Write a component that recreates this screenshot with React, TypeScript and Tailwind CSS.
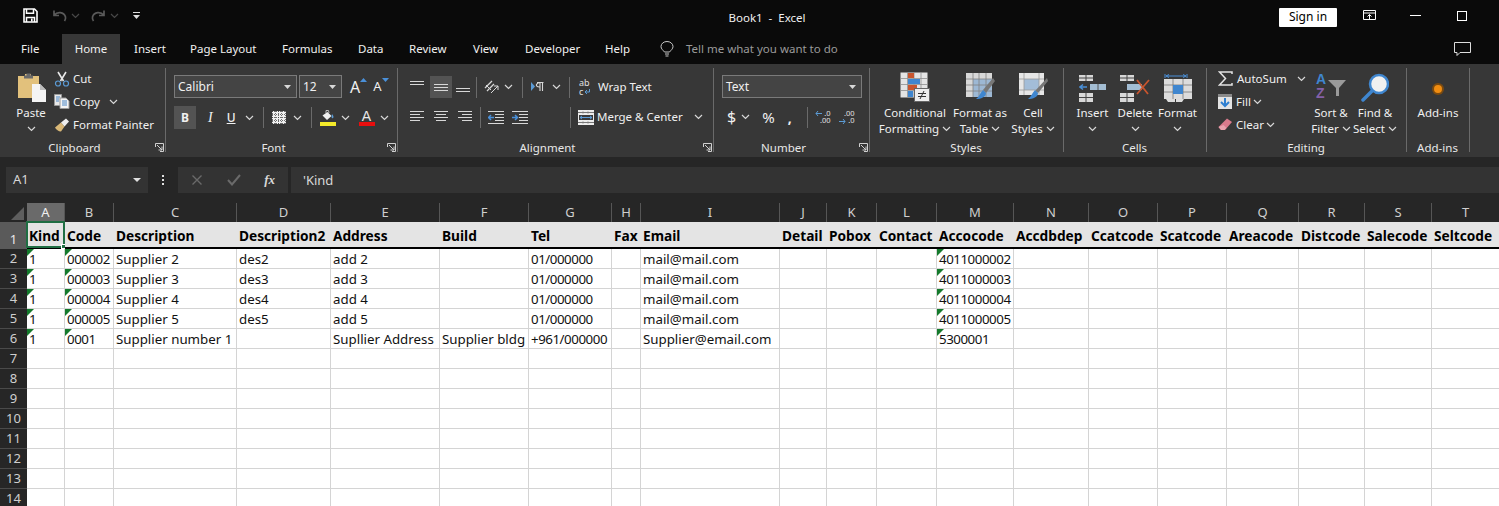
import React from "react";

const Chev = ({ c = "" }: { c?: string }) => (
  <svg width="9" height="6" viewBox="0 0 9 6" className={c}>
    <path d="M1 1l3.5 3.5L8 1" fill="none" stroke="#d8d8d8" strokeWidth="1.2" />
  </svg>
);
const Launcher = () => (
  <svg width="9" height="9" viewBox="0 0 9 9" className="absolute right-[1px] top-[75px]">
    <path d="M.5 4V.5H8.5V8.5H5" fill="none" stroke="#d0d0d0" />
    <path d="M2 2l5 5M7 3.5V7H3.5" fill="none" stroke="#d0d0d0" />
  </svg>
);
const Sep = ({ c = "" }: { c?: string }) => <div className={`w-px bg-[#6a6a6a] ${c}`} />;

const Group = ({ w, label, launcher, children }: { w: string; label: string; launcher?: boolean; children: React.ReactNode }) => (
  <div className={`relative flex h-[84px] shrink-0 flex-col border-r border-[#6a6a6a] ${w}`}>
    <div className="h-[72px] shrink-0">{children}</div>
    <div className={`mt-[1px] h-[14px] shrink-0 text-center text-[11.5px] leading-[14px] text-[#e8e8e8] ${launcher ? "pr-[16px]" : "pr-[1px]"}`}>{label}</div>
    {launcher && <Launcher />}
  </div>
);

const Big = ({ w, icon, l1, l2, chev }: { w: string; icon: React.ReactNode; l1: string; l2?: string; chev?: boolean }) => (
  <div className={`flex shrink-0 flex-col items-center ${w}`}>
    <div className="flex h-[34px] items-end justify-center">{icon}</div>
    <div className="mt-[3px] whitespace-nowrap leading-[16px]">{l1}</div>
    <div className="flex h-[16px] items-center justify-center gap-[3px] whitespace-nowrap leading-[16px]">
      {l2}
      {chev && <Chev />}
    </div>
  </div>
);

const Lines = ({ rows }: { rows: [number, number, number][] }) => (
  <svg width="16" height="14" viewBox="0 0 16 14">
    {rows.map(([x, y, w], i) => (
      <rect key={i} x={x} y={y} width={w} height="1" fill="#d8d8d8" />
    ))}
  </svg>
);

const Combo = ({ w, t }: { w: string; t: string }) => (
  <div className={`flex h-[23px] items-center justify-between border border-[#7a7a7a] bg-[#444444] pl-[3px] pr-[5px] text-[12px] ${w}`}>
    <span>{t}</span>
    <svg width="7" height="4" viewBox="0 0 7 4"><path d="M0 0h7L3.500 4z" fill="#d8d8d8" /></svg>
  </div>
);

const IconSave = () => (
  <svg width="15" height="15" viewBox="0 0 15 15">
    <path d="M1 1h10.500L14 3.500V14H1z" fill="none" stroke="#fff" strokeWidth="1.600" />
    <path d="M3.500 1v4.200h7V1" fill="none" stroke="#fff" strokeWidth="1.500" />
    <path d="M3.500 14V9.500h8V14" fill="none" stroke="#fff" strokeWidth="1.500" />
    <rect x="8" y="10.500" width="1.600" height="3" fill="#fff" />
  </svg>
);
const IconUndo = ({ flip }: { flip?: boolean }) => (
  <svg width="15" height="13" viewBox="0 0 15 13" className={flip ? "-scale-x-100" : ""}>
    <path d="M2 1.500v5h5M2.500 6C5 2.500 12 2.500 13.500 8c.3 1.500-.3 3-1 4" fill="none" stroke="#5a5a5a" strokeWidth="1.700" />
  </svg>
);
const IconPaste = () => (
  <svg width="30" height="30" viewBox="0 0 30 30">
    <path d="M2 4h7V2h6v2h8v22H2z" fill="#e2c17c" />
    <path d="M8 3.500h2.500V1.500h4v2H17v3H8z" fill="#6a6a6a" />
    <path d="M16 12h8l6 6v12H16z" fill="#f4f4f4" />
    <path d="M24 12v6h6" fill="#bdbdbd" />
  </svg>
);
const IconCut = () => (
  <svg width="16" height="16" viewBox="0 0 16 16">
    <path d="M4 1l5.500 9M12 1L6.500 10" stroke="#e8e8e8" strokeWidth="1.600" fill="none" />
    <circle cx="4" cy="12.500" r="2.500" fill="none" stroke="#5b9bd5" strokeWidth="1.200" />
    <circle cx="12" cy="12.500" r="2.500" fill="none" stroke="#5b9bd5" strokeWidth="1.200" />
  </svg>
);
const IconCopy = () => (
  <svg width="16" height="15" viewBox="0 0 16 15">
    <path d="M.5.5h7v11h-7z" fill="#e8e8e8" stroke="#999" />
    <path d="M6 4h6l3 3v7.500H6z" fill="#f4f4f4" stroke="#999" />
    <path d="M2 3h4M2 5h3M2 7h3M8 7h5M8 9h5M8 11h5" stroke="#4a86c5" />
  </svg>
);
const IconPainter = () => (
  <svg width="16" height="15" viewBox="0 0 16 15">
    <path d="M1 10.500l6-5 3.500 4-3.500 5c-2 .2-5-2-6-4z" fill="#d9b877" />
    <path d="M7 5.500L12 1.500l3 3-4.500 5z" fill="#eeeeee" />
  </svg>
);
const IconBorder = () => (
  <svg width="14" height="13" viewBox="0 0 14 13">
    <rect x="0" y="0" width="14" height="13" fill="#f0f0f0" />
    <path d="M0 .5h14M0 3.500h14M0 6.500h14M0 9.500h14M0 12.500h14M.5 0v13M3.500 0v13M6.500 0v13M9.500 0v13M13.500 0v13" stroke="#333" strokeWidth=".7" strokeDasharray="1 1" />
  </svg>
);
const IconFill = () => (
  <svg width="17" height="17" viewBox="0 0 17 17">
    <path d="M3.500 6.500L8.500 3l4 4-4.500 4z" fill="#f0f0f0" />
    <path d="M7 4V1.500h2.500L10 4" fill="none" stroke="#bbb" />
    <path d="M13 5c1.500 2 2 3 1 4s-2 0-1-4z" fill="#5b9bd5" />
    <rect x="1" y="13" width="16" height="4" fill="#f4ea2a" />
  </svg>
);
const IconFontColor = () => (
  <svg width="17" height="17" viewBox="0 0 17 17" className="overflow-visible">
    <text x="8.500" y="12" textAnchor="middle" fontSize="14" fill="#e8e8e8" fontFamily="Liberation Sans">A</text>
    <rect x="1" y="13" width="16" height="4" fill="#e80e0e" />
  </svg>
);
const IconOrient = () => (
  <svg width="16" height="16" viewBox="0 0 16 16">
    <path d="M1 9l7-7M3 12l7-7" stroke="#d8d8d8" strokeWidth="1.300" />
    <path d="M2 6l5 5M7 14l7-7m0 4V7h-4" stroke="#d8d8d8" fill="none" />
  </svg>
);
const IconRtl = () => (
  <svg width="13" height="10" viewBox="0 0 13 10">
    <path d="M0 0l4 4.500L0 9z" fill="#5b9bd5" />
    <path d="M9 1v8M11.500 1v8M6 .5h6.500M8.500 5C6 5 5 3.500 5.500 2.500S7 .5 9 .5" fill="none" stroke="#d8d8d8" strokeWidth="1.100" />
  </svg>
);
const IconWrap = () => (
  <div className="flex w-[14px] flex-col text-[9px] leading-[9px] text-[#e0e0e0]">
    <span>ab</span>
    <span className="flex items-center">c<svg width="6" height="6" viewBox="0 0 6 6" className="ml-[1px]"><path d="M5.500 0v3H1m2-2L1 3l2 2" stroke="#5b9bd5" fill="none" /></svg></span>
  </div>
);
const IconMerge = () => (
  <svg width="16" height="15" viewBox="0 0 16 15">
    <rect width="16" height="15" fill="#ececec" />
    <rect x="1" y="5" width="14" height="5" fill="#3a3a3a" />
    <path d="M5 1.500v2M10 1.500v2M5 11.500v2M10 11.500v2M0 2.500h16M0 12.500h16" stroke="#777" />
    <path d="M2 7.500h12M4 6l-2 1.500L4 9M12 6l2 1.500L12 9" stroke="#5b9bd5" fill="none" />
  </svg>
);
const IconIndent = ({ inc }: { inc?: boolean }) => (
  <svg width="16" height="13" viewBox="0 0 16 13">
    <path d="M0 .5h16M7 3.500h9M7 6.500h9M7 9.500h9M0 12.500h16" stroke="#d8d8d8" />
    {inc ? <path d="M0 6.500h5M3 4l2.500 2.500L3 9" stroke="#4a90d9" strokeWidth="1.500" fill="none" /> : <path d="M6 6.500H1M3 4L.5 6.500 3 9" stroke="#4a90d9" strokeWidth="1.500" fill="none" />}
  </svg>
);
const IconDec = ({ inc }: { inc?: boolean }) => (
  <div className="relative h-[15px] w-[16px] text-[7.5px] leading-[7.5px] text-[#e0e0e0]">
    <div className="text-right">{inc ? ".00" : ".0"}</div>
    <div className="text-right">{inc ? ".0" : ".00"}</div>
    <svg width="7" height="7" viewBox="0 0 7 7" className={inc ? "absolute bottom-0 left-0" : "absolute left-0 top-0"}>
      {inc ? <path d="M0 3.500h6M4 1l2 2.500L4 6" stroke="#5b9bd5" fill="none" /> : <path d="M1 3.500h6M3 1L1 3.500 3 6" stroke="#5b9bd5" fill="none" />}
    </svg>
  </div>
);
const TableBase = ({ children }: { children?: React.ReactNode }) => (
  <svg width="30" height="30" viewBox="0 0 30 30" className="overflow-visible">
    <rect x="0.500" y="0.500" width="27" height="25" fill="#e4e4e4" />
    <path d="M0 6.500h28M0 12.500h28M0 18.500h28M7.500 0v26M14 0v26M21 0v26" stroke="#8e8e8e" strokeWidth=".8" />
    {children}
  </svg>
);
const IconCF = () => (
  <TableBase>
    <rect x="8" y="1" width="6" height="5" fill="#c8552e" />
    <rect x="8" y="7" width="12" height="5" fill="#3f86cf" />
    <rect x="8" y="13" width="9" height="5" fill="#c8552e" />
    <rect x="8" y="19" width="5" height="6" fill="#3f86cf" />
    <rect x="14.500" y="16.500" width="15" height="13" fill="#eeeeee" stroke="#666" />
    <path d="M18 21.500h8M18 24.500h8M24 19l-4 8" stroke="#333" fill="none" />
  </TableBase>
);
const IconFT = () => (
  <svg width="30" height="30" viewBox="0 0 30 30">
    <rect x="1" y="1" width="26" height="24" fill="#d8d8d8" />
    <rect x="8" y="7" width="19" height="18" fill="#9db8d4" />
    <path d="M1 7h26M1 13h26M1 19h26M8 1v24M14 1v24M21 1v24" stroke="#808080" strokeWidth=".8" />
    <path d="M28 6l2 3-9 12-3-3z" fill="#777" />
    <path d="M18 18l3 3c0 4-5 6-10 6 3-2 4-6 7-9z" fill="#3f86cf" />
  </svg>
);
const IconCS = () => (
  <svg width="30" height="30" viewBox="0 0 30 30">
    <rect x="1" y="1" width="25" height="22" fill="#e6e6e6" />
    <rect x="6" y="7" width="15" height="11" fill="#a3bdd8" />
    <path d="M1 7h25M1 18h25M6 1v22M21 1v22" stroke="#999" strokeWidth=".8" />
    <path d="M29 6l1 3-10 12-3-2z" fill="#777" />
    <path d="M17 18l3 3c0 4-5 6-10 6 3-2 4-6 7-9z" fill="#3f86cf" />
  </svg>
);
const cellsA = "M0 0h14v6H0zM0 18h14v9H0z";
const IconInsert = () => (
  <svg width="27" height="27" viewBox="0 0 27 27">
    <path d={cellsA} fill="#d8d8d8" />
    <path d="M0 3h14M7 0v6M0 22.500h14M7 18v9" stroke="#444" />
    <path d="M11 9h16v6H11z" fill="#a3bdd3" />
    <path d="M19 9v6" stroke="#555" />
    <path d="M8 12H1M4 9.500L1 12l3 2.500" stroke="#4a90d9" strokeWidth="1.500" fill="none" />
  </svg>
);
const IconDelete = () => (
  <svg width="30" height="27" viewBox="0 0 30 27">
    <path d={cellsA} fill="#d8d8d8" />
    <path d="M0 3h14M7 0v6M0 22.500h14M7 18v9" stroke="#444" />
    <path d="M7 9h15v6H7z" fill="#a3bdd3" />
    <path d="M17 5l11 14M29 5L17 19" stroke="#c8552e" strokeWidth="1.800" />
  </svg>
);
const IconFormat = () => (
  <svg width="28" height="29" viewBox="0 0 28 29">
    <path d="M1 1v4M23 1v4M2 3h20M5 1.500L2 3l3 1.500M19 1.500L22 3l-3 1.500" stroke="#4a90d9" fill="none" />
    <rect y="6" width="28" height="20" fill="#dcdcdc" />
    <path d="M0 12h28M0 19h28M9 6v20M19 6v20" stroke="#777" strokeWidth=".8" />
    <rect x="9" y="12" width="10" height="9" fill="#3f86cf" />
    <path d="M2 26h9v3H4zM12 26h8l-2 3h-6z" fill="#dcdcdc" />
  </svg>
);
const IconSum = () => (
  <svg width="15" height="15" viewBox="0 0 15 15">
    <path d="M14 3V1H1.500l6 6.500-6 6.500H14v-2" fill="none" stroke="#e4e4e4" strokeWidth="1.500" />
  </svg>
);
const IconFillDown = () => (
  <svg width="14" height="15" viewBox="0 0 14 15">
    <rect width="14" height="15" fill="#e4e4e4" />
    <rect y="0" width="14" height="3" fill="#8a8a8a" />
    <path d="M7 4v8M3 8l4 4 4-4" stroke="#2f7fd0" strokeWidth="2" fill="none" />
  </svg>
);
const IconEraser = () => (
  <svg width="14" height="13" viewBox="0 0 14 13">
    <path d="M9 .5L14 4l-7 8H3L.500 9z" fill="#d97a8c" />
    <path d="M.500 9l5-2 3 3-2 2H3z" fill="#e9a2ae" />
  </svg>
);
const IconSort = () => (
  <div className="relative h-[30px] w-[30px] font-['Liberation_Sans',sans-serif] text-[14px] font-bold leading-[14px]">
    <div className="text-[#3f86cf]">A</div>
    <div className="text-[#8460a8]">Z</div>
    <svg width="18" height="17" viewBox="0 0 18 17" className="absolute left-[12px] top-[8px]"><path d="M0 0h18l-7 8v8H8V8z" fill="#9a9a9a" /></svg>
  </div>
);
const IconFind = () => (
  <svg width="28" height="29" viewBox="0 0 28 29">
    <circle cx="18" cy="11" r="9" fill="#f0f0f0" stroke="#3f86cf" strokeWidth="2.500" />
    <path d="M11 18L2 27" stroke="#3f86cf" strokeWidth="3.500" strokeLinecap="round" />
  </svg>
);
const IconAddins = () => (
  <svg width="16" height="30" viewBox="0 0 16 30">
    <circle cx="8" cy="17" r="6" fill="#7a4a10" />
    <circle cx="8" cy="17" r="4" fill="#f08c10" />
  </svg>
);
const FxX = () => (
  <svg width="12" height="12" viewBox="0 0 12 12"><path d="M1.500 1.500l9 9M10.500 1.500l-9 9" stroke="#6a6a6a" strokeWidth="1.400" /></svg>
);
const FxC = () => (
  <svg width="14" height="12" viewBox="0 0 14 12"><path d="M1 6l4 4.500L13 1" fill="none" stroke="#6a6a6a" strokeWidth="2" /></svg>
);

const tabs: [string, string][] = [
  ["File", "w-[62px] pl-[21px]"],
  ["Home", "w-[58px] justify-center bg-[#373737]"],
  ["Insert", "w-[70px] pl-[14px]"],
  ["Page Layout", "w-[92px] pl-[0px]"],
  ["Formulas", "w-[76px]"],
  ["Data", "w-[51px]"],
  ["Review", "w-[64px]"],
  ["View", "w-[52px]"],
  ["Developer", "w-[80px]"],
  ["Help", "w-[55px]"],
];

const headers = ["Kind", "Code", "Description", "Description2", "Address", "Build", "Tel", "Fax", "Email", "Detail", "Pobox", "Contact", "Accocode", "Accdbdep", "Ccatcode", "Scatcode", "Areacode", "Distcode", "Salecode", "Seltcode"];
const letters = "ABCDEFGHIJKLMNOPQRST".split("");
const data: Record<number, string[]> = {
  2: ["1", "000002", "Supplier 2", "des2", "add 2", "", "01/000000", "", "mail@mail.com", "", "", "", "4011000002"],
  3: ["1", "000003", "Supplier 3", "des3", "add 3", "", "01/000000", "", "mail@mail.com", "", "", "", "4011000003"],
  4: ["1", "000004", "Supplier 4", "des4", "add 4", "", "01/000000", "", "mail@mail.com", "", "", "", "4011000004"],
  5: ["1", "000005", "Supplier 5", "des5", "add 5", "", "01/000000", "", "mail@mail.com", "", "", "", "4011000005"],
  6: ["1", "0001", "Supplier number 1", "", "Supllier Address", "Supplier bldg", "+961/000000", "", "Supplier@email.com", "", "", "", "5300001"],
};
const rows = [2, 3, 4, 5, 6, 7, 8, 9, 10, 11, 12, 13, 14];
const Tri = () => (
  <svg width="7" height="7" viewBox="0 0 7 7" className="absolute left-0 top-0"><path d="M0 0h7L0 7z" fill="#157a2c" /></svg>
);

export default function App() {
  return (
    <div className="h-[506px] w-[1499px] overflow-hidden bg-[#262626] font-['Noto_Sans',sans-serif] text-[#f0f0f0]">
      {/* title row */}
      <div className="flex h-[34px] items-center bg-[#0a0a0a] text-[11.5px]">
        <div className="ml-[23px] mt-[-3px] flex w-[679px] items-center">
          <IconSave />
          <div className="ml-[14px]"><IconUndo /></div>
          <Chev c="ml-[4px] opacity-30" />
          <div className="ml-[11px]"><IconUndo flip /></div>
          <Chev c="ml-[4px] opacity-30" />
          <svg width="7" height="7" viewBox="0 0 7 7" className="ml-[14px]"><path d="M0 .5h7" stroke="#ddd" /><path d="M0 3h7L3.500 7z" fill="#ddd" /></svg>
        </div>
        <div className="w-[130px] pt-[1px] text-center">Book1&nbsp; -&nbsp; Excel</div>
        <div className="ml-[447px] flex h-[19px] w-[58px] items-center justify-center rounded-[1px] bg-white text-[12px] text-black">Sign in</div>
        <svg width="14" height="11" viewBox="0 0 14 11" className="mb-[3px] ml-[26px]"><path d="M.500.500h12v9h-12zM0 3h13M6.500 9V4.500M4.500 6.500l2-2 2 2" fill="none" stroke="#fff" /></svg>
        <div className="mb-[3px] ml-[33px] h-px w-[11px] bg-white" />
        <div className="mb-[3px] ml-[36px] h-[10px] w-[10px] border border-white" />
      </div>
      {/* tabs */}
      <div className="flex h-[30px] items-stretch bg-[#0a0a0a] text-[11.5px]">
        {tabs.map(([t, c]) => (
          <div key={t} className={`flex items-center ${c}`}>{t}</div>
        ))}
        <div className="flex items-center text-[#9a9a9a]">
          <svg width="14" height="16" viewBox="0 0 14 16"><path d="M4.500 11C3 9 1 8 1 5.500a6 5 0 0 1 12 0C13 8 11 9 9.500 11zM5 13h4M5.500 15h3" fill="none" stroke="#c8c8c8" /></svg>
          <span className="ml-[12px]">Tell me what you want to do</span>
        </div>
        <div className="flex flex-1 items-center justify-end pr-[28px]">
          <svg width="17" height="15" viewBox="0 0 17 15"><path d="M.500.500h16v10H6l-3 3v-3H.500z" fill="none" stroke="#ddd" /></svg>
        </div>
      </div>
      {/* ribbon */}
      <div className="flex h-[93px] bg-[#373737] pb-[5px] pt-[4px] text-[11.5px] text-[#f0f0f0]">
        <Group w="w-[166px]" label="Clipboard" launcher>
          <div className="flex">
            <div className="ml-[10px] w-[42px]">
              <Big w="w-[42px]" icon={<IconPaste />} l1="Paste" chev />
            </div>
            <div className="ml-[2px] mt-[-1px] flex flex-col">
              <div className="flex h-[23px] items-center gap-[3px]"><IconCut /><span>Cut</span></div>
              <div className="flex h-[23px] items-center gap-[3px]"><IconCopy /><span>Copy</span><Chev c="ml-[6px]" /></div>
              <div className="flex h-[23px] items-center gap-[3px]"><IconPainter /><span>Format Painter</span></div>
            </div>
          </div>
        </Group>
        <Group w="w-[232px]" label="Font" launcher>
          <div className="pl-[8px] pt-[7px]">
            <div className="flex items-center">
              <Combo w="w-[123px]" t="Calibri" />
              <div className="ml-[2px]"><Combo w="w-[43px]" t="12" /></div>
              <span className="ml-[8px] text-[16px] leading-none">A</span>
              <svg width="7" height="4" viewBox="0 0 7 4" className="mb-[14px]"><path d="M0 4h7L3.500 0z" fill="#4a90d9" /></svg>
              <span className="ml-[6px] text-[13px] leading-none">A</span>
              <svg width="7" height="4" viewBox="0 0 7 4" className="mb-[14px]"><path d="M0 0h7L3.500 4z" fill="#4a90d9" /></svg>
            </div>
            <div className="mt-[8px] flex h-[23px] items-center">
              <div className="flex h-[23px] w-[22px] items-center justify-center bg-[#535353] text-[12px] font-bold">B</div>
              <span className="ml-[12px] font-['Liberation_Serif',serif] text-[14px] italic">I</span>
              <span className="ml-[14px] text-[12px] font-medium underline">U</span>
              <Chev c="ml-[9px]" />
              <Sep c="ml-[9px] h-[21px]" />
              <div className="ml-[8px]"><IconBorder /></div>
              <Chev c="ml-[7px]" />
              <Sep c="ml-[9px] h-[21px]" />
              <div className="ml-[7px]"><IconFill /></div>
              <Chev c="ml-[5px]" />
              <div className="ml-[8px]"><IconFontColor /></div>
              <Chev c="ml-[5px]" />
            </div>
          </div>
        </Group>
        <Group w="w-[316px]" label="Alignment" launcher>
          <div className="pl-[12px] pt-[8px]">
            <div className="flex h-[22px] items-center">
              <Lines rows={[[0, 1, 14], [0, 4, 14]]} />
              <div className="ml-[4px] flex h-[22px] w-[22px] items-center justify-center bg-[#535353]"><Lines rows={[[1, 4, 14], [1, 7, 14], [1, 10, 14]]} /></div>
              <div className="ml-[4px]"><Lines rows={[[0, 8, 14], [0, 11, 14]]} /></div>
              <Sep c="ml-[4px] h-[21px]" />
              <div className="ml-[7px]"><IconOrient /></div>
              <Chev c="ml-[4px]" />
              <Sep c="ml-[9px] h-[21px]" />
              <div className="ml-[8px]"><IconRtl /></div>
              <Chev c="ml-[8px]" />
              <Sep c="ml-[8px] h-[21px]" />
              <div className="ml-[9px]"><IconWrap /></div>
              <span className="ml-[5px]">Wrap Text</span>
            </div>
            <div className="mt-[8px] flex h-[22px] items-center">
              <Lines rows={[[0, 1, 14], [0, 4, 10], [0, 7, 14], [0, 10, 10]]} />
              <div className="ml-[8px]"><Lines rows={[[0, 1, 14], [2, 4, 10], [0, 7, 14], [2, 10, 10]]} /></div>
              <div className="ml-[8px]"><Lines rows={[[0, 1, 14], [4, 4, 10], [0, 7, 14], [4, 10, 10]]} /></div>
              <Sep c="ml-[6px] h-[21px]" />
              <div className="ml-[7px]"><IconIndent /></div>
              <div className="ml-[8px]"><IconIndent inc /></div>
              <Sep c="ml-[42px] h-[21px]" />
              <div className="ml-[7px]"><IconMerge /></div>
              <span className="ml-[3px]">Merge &amp; Center</span>
              <Chev c="ml-[11px]" />
            </div>
          </div>
        </Group>
        <Group w="w-[156px]" label="Number" launcher>
          <div className="pl-[8px] pt-[7px]">
            <Combo w="w-[140px]" t="Text" />
            <div className="mt-[8px] flex h-[22px] items-center">
              <span className="ml-[5px] text-[16px]">$</span>
              <Chev c="ml-[5px]" />
              <span className="ml-[12px] text-[15px]">%</span>
              <span className="ml-[13px] text-[14px] font-bold">,</span>
              <Sep c="ml-[15px] h-[21px]" />
              <div className="ml-[7px]"><IconDec /></div>
              <div className="ml-[8px]"><IconDec inc /></div>
            </div>
          </div>
        </Group>
        <Group w="w-[194px]" label="Styles">
          <div className="flex pl-[10px]">
            <Big w="w-[70px]" icon={<IconCF />} l1="Conditional" l2="Formatting" chev />
            <Big w="w-[60px]" icon={<IconFT />} l1="Format as" l2="Table" chev />
            <Big w="w-[46px]" icon={<IconCS />} l1="Cell" l2="Styles" chev />
          </div>
        </Group>
        <Group w="w-[143px]" label="Cells">
          <div className="flex pl-[7px]">
            <Big w="w-[43px]" icon={<IconInsert />} l1="Insert" chev />
            <Big w="w-[42px]" icon={<IconDelete />} l1="Delete" chev />
            <Big w="w-[43px]" icon={<IconFormat />} l1="Format" chev />
          </div>
        </Group>
        <Group w="w-[200px]" label="Editing">
          <div className="flex pl-[11px]">
            <div className="mt-[-1px] flex w-[91px] flex-col">
              <div className="flex h-[23px] items-center gap-[4px]"><IconSum /><span>AutoSum</span><Chev c="ml-[6px]" /></div>
              <div className="flex h-[23px] items-center gap-[4px]"><IconFillDown /><span>Fill</span><Chev c="ml-[-2px]" /></div>
              <div className="flex h-[23px] items-center gap-[4px]"><IconEraser /><span>Clear</span><Chev c="ml-[-2px]" /></div>
            </div>
            <Big w="w-[44px]" icon={<IconSort />} l1="Sort &amp;" l2="Filter" chev />
            <Big w="w-[44px]" icon={<IconFind />} l1="Find &amp;" l2="Select" chev />
          </div>
        </Group>
        <Group w="w-[63px]" label="Add-ins">
          <Big w="w-[62px]" icon={<IconAddins />} l1="Add-ins" />
        </Group>
      </div>
      {/* formula bar */}
      <div className="flex h-[46px] items-start bg-[#262626] pt-[10px] text-[13px] text-[#d8d8d8]">
        <div className="ml-[6px] flex h-[26px] w-[142px] items-center justify-between bg-[#333333] px-[7px]">
          <span>A1</span>
          <svg width="8" height="4" viewBox="0 0 8 4"><path d="M0 0h8L4 4z" fill="#e0e0e0" /></svg>
        </div>
        <div className="flex h-[26px] w-[30px] flex-col items-center justify-center gap-[2px]">
          <div className="h-[2px] w-[2px] bg-[#e0e0e0]" />
          <div className="h-[2px] w-[2px] bg-[#e0e0e0]" />
          <div className="h-[2px] w-[2px] bg-[#e0e0e0]" />
        </div>
        <div className="flex h-[26px] w-[110px] items-center justify-between bg-[#333333] px-[13px]">
          <FxX />
          <FxC />
          <span className="font-['Liberation_Serif',serif] text-[13px] font-bold italic">fx</span>
        </div>
        <div className="ml-[3px] flex h-[26px] flex-1 items-center bg-[#333333] pl-[12px] pt-[1px]">'Kind</div>
      </div>
      {/* sheet */}
      <div className="grid grid-cols-[27px_38px_49px_123px_94px_109px_89px_83px_29px_139px_47px_50px_60px_77px_75px_69px_69px_72px_66px_67px_68px] grid-rows-[19px_27px_repeat(13,20px)]">
        <div className="flex items-end justify-end pb-[2px] pr-[3px]">
          <svg width="13" height="13" viewBox="0 0 13 13"><path d="M13 0v13H0z" fill="#5e5e5e" /></svg>
        </div>
        {letters.map((l, i) => (
          <div key={l} className={`flex items-center justify-center border-r border-[#565656] text-[13px] ${i === 0 ? "bg-[#6a6a6a] text-[#f0f0f0]" : "text-[#cfcfcf]"}`}>{l}</div>
        ))}
        <div className="flex items-end justify-center bg-[#5a5a5a] text-[13px] text-[#e8e8e8]">1</div>
        {headers.map((h, i) => (
          <div key={h} className="relative flex items-center whitespace-nowrap border-b-2 border-black bg-[#e4e4e4] pl-[2px] pt-[4px] text-[13.7px] font-bold text-black">
            {h}
            {i === 0 && (
              <div className="absolute left-[-1px] top-[-1px] h-[27px] w-[39px] border-2 border-[#1f6e43]">
                <div className="absolute bottom-[-3px] right-[-3px] h-[5px] w-[5px] border border-white bg-[#1f6e43]" />
              </div>
            )}
          </div>
        ))}
        {rows.map((r) => (
          <React.Fragment key={r}>
            <div className="flex items-center justify-center border-b border-[#4a4a4a] text-[13px] text-[#cfcfcf]">{r}</div>
            {letters.map((l, i) => {
              const v = data[r]?.[i] ?? "";
              const numeric = /^[+0-9/]+$/.test(v);
              return (
                <div key={l} className={`relative flex items-center whitespace-nowrap border-b border-r border-[#d4d4d4] bg-white pl-[2px] pt-[2px] text-[13.3px] text-[#111] ${numeric ? "tracking-[-0.45px]" : ""}`}>
                  {v && (i === 0 || i === 1 || i === 12) && <Tri />}
                  {v}
                </div>
              );
            })}
          </React.Fragment>
        ))}
      </div>
    </div>
  );
}
